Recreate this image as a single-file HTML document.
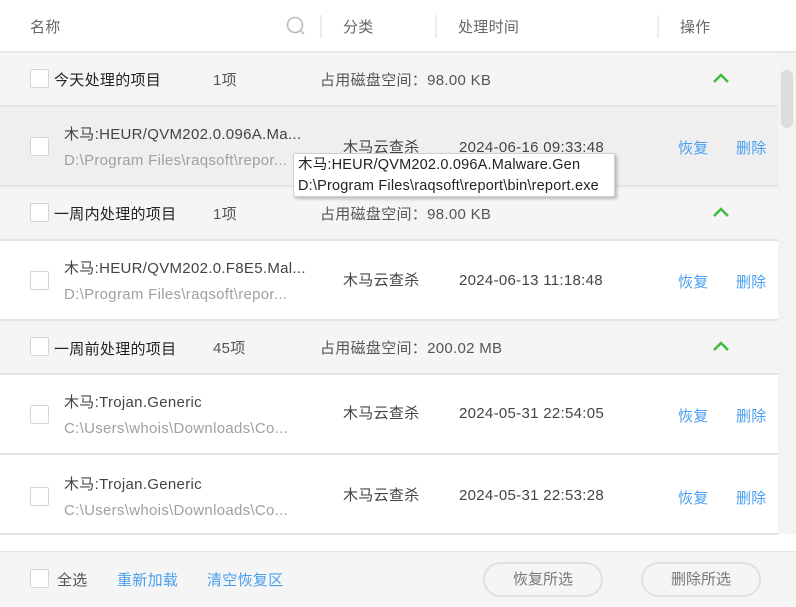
<!DOCTYPE html>
<html><head><meta charset="utf-8"><style>
*{margin:0;padding:0;box-sizing:border-box}
body{width:796px;height:607px;overflow:hidden;background:#fff;font-family:"Liberation Sans","Noto Sans CJK SC",sans-serif;font-size:15px;color:#444;position:relative}
.a{position:absolute;white-space:nowrap;line-height:20px;margin-top:2px;letter-spacing:0.3px}
.hd{color:#666}
.dv{position:absolute;top:15px;width:2px;height:23px;background:#ececec}
.row{position:absolute;left:0;width:778px;border-bottom:2px solid #e4e4e4}
.g{height:54px;background:#f5f5f5}
.i{height:80px;background:#fff}
.cb{position:absolute;width:19px;height:19px;border:1px solid #d5d5d5;background:#fff;border-radius:2px}
.blue{color:#4a9ef0}
.gray{color:#a0a0a0}
.chev{position:absolute;left:712px;width:18px;height:10px}
.btn{position:absolute;top:562px;width:120px;height:35px;border:2px solid #e0e0e0;border-radius:18px;text-align:center;line-height:31px;color:#777;background:#f5f5f5}
.tt{position:absolute;white-space:nowrap;line-height:20px;color:#222;font-size:14.5px;letter-spacing:0.2px}
</style></head><body>
<div class="a hd" style="left:30px;top:16px">名称</div>
<svg style="position:absolute;left:286px;top:16px" width="20" height="20" viewBox="0 0 20 20"><circle cx="9" cy="9" r="7.5" fill="none" stroke="#bbb" stroke-width="1.6"/><path d="M14.5 14.5 L18 18" stroke="#bbb" stroke-width="1.6"/></svg>
<div class="dv" style="left:320px"></div>
<div class="a hd" style="left:343px;top:16px">分类</div>
<div class="dv" style="left:435px"></div>
<div class="a hd" style="left:458px;top:16px">处理时间</div>
<div class="dv" style="left:657px"></div>
<div class="a hd" style="left:680px;top:16px">操作</div>
<div style="position:absolute;left:0;top:51px;width:796px;height:2px;background:#e8e8e8"></div>

<div style="position:absolute;left:778px;top:53px;width:18px;height:481px;background:#f3f3f3"></div>
<div style="position:absolute;left:781px;top:70px;width:12px;height:58px;background:#dcdcdc;border-radius:6px"></div>

<div class="row g" style="top:53px"></div>
<div class="cb" style="left:30px;top:69px"></div>
<div class="a" style="left:54px;top:69px;color:#222">今天处理的项目</div>
<div class="a" style="left:213px;top:69px;color:#555">1项</div>
<div class="a" style="left:320px;top:69px;color:#555">占用磁盘空间：98.00 KB</div>
<svg class="chev" style="top:73px" viewBox="0 0 18 10"><path d="M2 9 L9 2 L16 9" fill="none" stroke="#3dbb3d" stroke-width="2.4"/></svg>
<div class="row i" style="top:107px;background:#efefef"></div>
<div class="cb" style="left:30px;top:137px"></div>
<div class="a" style="left:64px;top:123px">木马:HEUR/QVM202.0.096A.Ma...</div>
<div class="a gray" style="left:64px;top:149px">D:\Program Files\raqsoft\repor...</div>
<div class="a" style="left:343px;top:136px">木马云查杀</div>
<div class="a" style="left:459px;top:136px">2024-06-16 09:33:48</div>
<div class="a blue" style="left:678px;top:137px">恢复</div>
<div class="a blue" style="left:736px;top:137px">删除</div>

<div class="row g" style="top:187px"></div>
<div class="cb" style="left:30px;top:203px"></div>
<div class="a" style="left:54px;top:203px;color:#222">一周内处理的项目</div>
<div class="a" style="left:213px;top:203px;color:#555">1项</div>
<div class="a" style="left:320px;top:203px;color:#555">占用磁盘空间：98.00 KB</div>
<svg class="chev" style="top:207px" viewBox="0 0 18 10"><path d="M2 9 L9 2 L16 9" fill="none" stroke="#3dbb3d" stroke-width="2.4"/></svg>
<div class="row i" style="top:241px"></div>
<div class="cb" style="left:30px;top:271px"></div>
<div class="a" style="left:64px;top:257px">木马:HEUR/QVM202.0.F8E5.Mal...</div>
<div class="a gray" style="left:64px;top:283px">D:\Program Files\raqsoft\repor...</div>
<div class="a" style="left:343px;top:269px">木马云查杀</div>
<div class="a" style="left:459px;top:269px">2024-06-13 11:18:48</div>
<div class="a blue" style="left:678px;top:271px">恢复</div>
<div class="a blue" style="left:736px;top:271px">删除</div>

<div class="row g" style="top:321px"></div>
<div class="cb" style="left:30px;top:337px"></div>
<div class="a" style="left:54px;top:338px;color:#222">一周前处理的项目</div>
<div class="a" style="left:213px;top:337px;color:#555">45项</div>
<div class="a" style="left:320px;top:337px;color:#555">占用磁盘空间：200.02 MB</div>
<svg class="chev" style="top:341px" viewBox="0 0 18 10"><path d="M2 9 L9 2 L16 9" fill="none" stroke="#3dbb3d" stroke-width="2.4"/></svg>
<div class="row i" style="top:375px"></div>
<div class="cb" style="left:30px;top:405px"></div>
<div class="a" style="left:64px;top:391px">木马:Trojan.Generic</div>
<div class="a gray" style="left:64px;top:417px">C:\Users\whois\Downloads\Co...</div>
<div class="a" style="left:343px;top:402px">木马云查杀</div>
<div class="a" style="left:459px;top:402px">2024-05-31 22:54:05</div>
<div class="a blue" style="left:678px;top:405px">恢复</div>
<div class="a blue" style="left:736px;top:405px">删除</div>
<div class="row i" style="top:455px"></div>
<div class="cb" style="left:30px;top:487px"></div>
<div class="a" style="left:64px;top:473px">木马:Trojan.Generic</div>
<div class="a gray" style="left:64px;top:499px">C:\Users\whois\Downloads\Co...</div>
<div class="a" style="left:343px;top:484px">木马云查杀</div>
<div class="a" style="left:459px;top:484px">2024-05-31 22:53:28</div>
<div class="a blue" style="left:678px;top:487px">恢复</div>
<div class="a blue" style="left:736px;top:487px">删除</div>

<div style="position:absolute;left:293px;top:153px;width:322px;height:44px;background:#fff;border:1px solid #d0d0d0;border-radius:2px;box-shadow:2px 2px 3px rgba(0,0,0,.25)"></div>
<div class="tt" style="left:298px;top:155px">木马:HEUR/QVM202.0.096A.Malware.Gen</div>
<div class="tt" style="left:298px;top:176px">D:\Program Files\raqsoft\report\bin\report.exe</div>

<div style="position:absolute;left:0;top:551px;width:796px;height:56px;background:#f5f5f5;border-top:1px solid #e4e4e4"></div>
<div class="cb" style="left:30px;top:569px"></div>
<div class="a" style="left:57px;top:569px;color:#555">全选</div>
<div class="a blue" style="left:117px;top:569px">重新加载</div>
<div class="a blue" style="left:207px;top:569px">清空恢复区</div>
<div class="btn" style="left:483px">恢复所选</div>
<div class="btn" style="left:641px">删除所选</div>
</body></html>
